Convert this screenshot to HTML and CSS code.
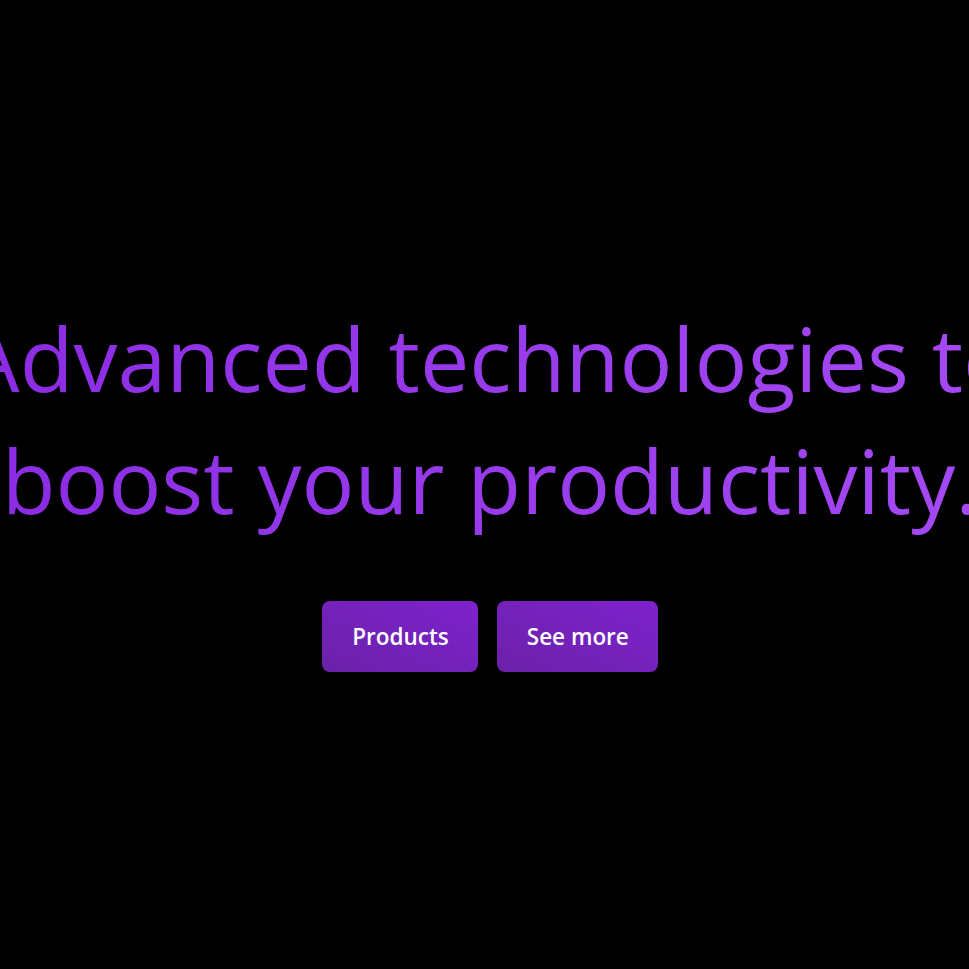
FILE: index.html
```html
<!DOCTYPE html>
<html lang="en">
<head>
<meta charset="utf-8">
<title>Hero</title>
<link rel="stylesheet" href="styles.css">
</head>
<body>
<main class="hero">
  <h1 class="hero-title">Advanced technologies to<br>boost your productivity.</h1>
  <div class="hero-actions">
    <a class="btn" href="#">Products</a>
    <a class="btn" href="#">See more</a>
  </div>
</main>
</body>
</html>
```
FILE: styles.css
```css
html, body {
  margin: 0;
  padding: 0;
  background: #000;
  overflow: hidden;
}
.hero {
  box-sizing: border-box;
  min-height: 100vh;
  padding-left: 11px;
  display: flex;
  flex-direction: column;
  align-items: center;
  justify-content: center;
  font-family: "Open Sans", "Noto Sans", sans-serif;
}
.hero-title {
  width: max-content;
  margin: 0;
  font-size: 88px;
  font-weight: 400;
  line-height: 122px;
  text-align: center;
  white-space: nowrap;
  background: linear-gradient(to right, #8a2be2, #a64af5);
  -webkit-background-clip: text;
  background-clip: text;
  color: transparent;
}
.hero-actions {
  display: flex;
  gap: 19px;
  margin-top: 60px;
}
.btn {
  display: block;
  padding: 19px 29px 19px 30px;
  border-radius: 8px;
  background: linear-gradient(to top right, #6b21a8, #7e22ce);
  color: #fff;
  font-size: 22.5px;
  font-weight: 600;
  line-height: 33px;
  text-decoration: none;
}
```
